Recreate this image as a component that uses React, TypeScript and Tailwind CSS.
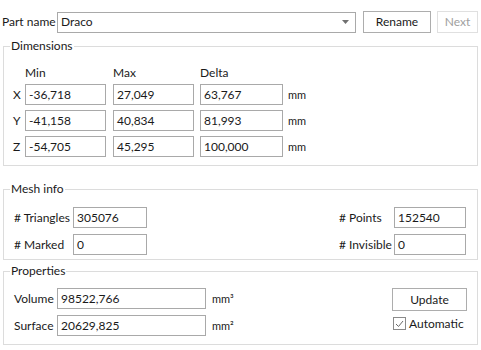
import React from 'react';

const field = 'h-[21px] border border-[#a9a9a9] bg-white flex items-center pl-[3px]';

const dims = [
  { axis: 'X', min: '-36,718', max: '27,049', delta: '63,767' },
  { axis: 'Y', min: '-41,158', max: '40,834', delta: '81,993' },
  { axis: 'Z', min: '-54,705', max: '45,295', delta: '100,000' },
];

const Group: React.FC<{ title: string; className?: string; children: React.ReactNode }> = ({ title, className, children }) => (
  <fieldset className={`mx-[3px] border border-[#dcdcdc] ${className ?? ''}`}>
    <legend className="ml-[6px] px-[1px] h-[16px] leading-[16px]">{title}</legend>
    {children}
  </fieldset>
);

const App: React.FC = () => {
  return (
    <div className="w-[481px] h-[350px] bg-white text-[12px] leading-none text-[#1a1a1a] whitespace-nowrap font-['Lato',sans-serif] overflow-hidden">
      <div className="flex items-center h-[22px] mt-[11px] pl-[2px]">
        <span className="w-[55px]">Part name</span>
        <div className={`${field} w-[299px] pr-[6px]`}>
          <span>Draco</span>
          <svg className="ml-auto" width="7" height="4" viewBox="0 0 7 4">
            <path d="M0 0h7L3.5 4z" fill="#707070" />
          </svg>
        </div>
        <button className="ml-[7px] w-[68px] h-[22px] border border-[#adadad] bg-white">Rename</button>
        <button className="ml-[6px] w-[41px] h-[22px] border border-[#e0e0e0] bg-white text-[#a0a0a0]">Next</button>
      </div>

      <Group title="Dimensions" className="mt-[5px] h-[128px]">
        <div className="pl-[9px]">
          <div className="flex mt-[11px] h-[16px] items-center pl-[12px]">
            <span className="w-[88px]">Min</span>
            <span className="w-[87px]">Max</span>
            <span>Delta</span>
          </div>
          <div className="flex flex-col gap-[5px] mt-[3px]">
            {dims.map((d) => (
              <div key={d.axis} className="flex items-center">
                <span className="w-[12px]">{d.axis}</span>
                <div className={`${field} w-[81px]`}>{d.min}</div>
                <div className={`${field} w-[81px] ml-[7px]`}>{d.max}</div>
                <div className={`${field} w-[83px] ml-[6px]`}>{d.delta}</div>
                <span className="ml-[5px] text-[11px]">mm</span>
              </div>
            ))}
          </div>
        </div>
      </Group>

      <Group title="Mesh info" className="mt-[15px] h-[79px]">
        <div className="flex mt-[10px] pl-[10px] pr-[11px]">
          <div className="flex flex-col gap-[6px]">
            <div className="flex items-center">
              <span className="w-[59px]"># Triangles</span>
              <div className={`${field} w-[74px]`}>305076</div>
            </div>
            <div className="flex items-center">
              <span className="w-[59px]"># Marked</span>
              <div className={`${field} w-[74px]`}>0</div>
            </div>
          </div>
          <div className="flex flex-col gap-[6px] ml-auto">
            <div className="flex items-center">
              <span className="w-[55px]"># Points</span>
              <div className={`${field} w-[72px]`}>152540</div>
            </div>
            <div className="flex items-center">
              <span className="w-[55px]"># Invisible</span>
              <div className={`${field} w-[72px]`}>0</div>
            </div>
          </div>
        </div>
      </Group>

      <Group title="Properties" className="mt-[3px] h-[82px]">
        <div className="flex mt-[9px] pl-[10px] pr-[10px]">
          <div className="flex flex-col gap-[6px]">
            <div className="flex items-center">
              <span className="w-[43px]">Volume</span>
              <div className={`${field} w-[149px]`}>98522,766</div>
              <span className="ml-[6px] text-[11px]">mm³</span>
            </div>
            <div className="flex items-center">
              <span className="w-[43px]">Surface</span>
              <div className={`${field} w-[149px]`}>20629,825</div>
              <span className="ml-[6px] text-[11px]">mm²</span>
            </div>
          </div>
          <div className="flex flex-col ml-auto w-[75px]">
            <button className="h-[23px] border border-[#adadad] bg-white">Update</button>
            <label className="flex items-center mt-[6px] ml-[1px]">
              <span className="w-[13px] h-[13px] border border-[#8a8a8a] bg-white flex items-center justify-center">
                <svg width="9" height="8" viewBox="0 0 9 8">
                  <path d="M1 4l2.5 2.5L8 1" fill="none" stroke="#6a6a6a" strokeWidth="1" />
                </svg>
              </span>
              <span className="ml-[3px]">Automatic</span>
            </label>
          </div>
        </div>
      </Group>
    </div>
  );
};

export default App;
